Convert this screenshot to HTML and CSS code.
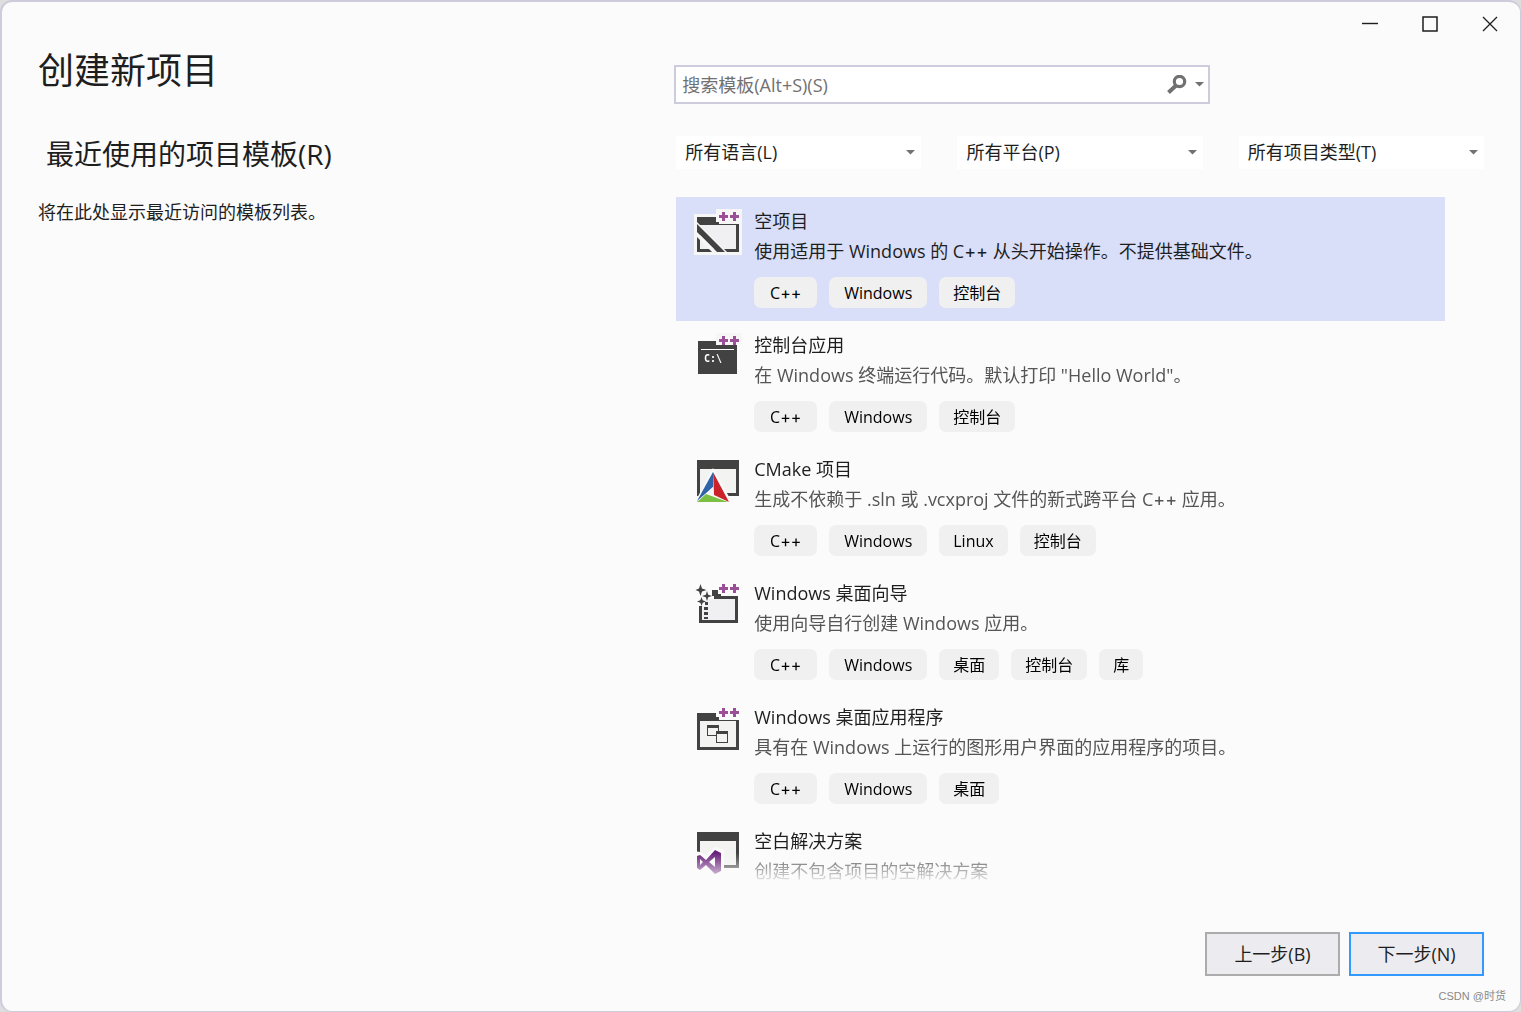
FILE: index.html
```html
<!DOCTYPE html>
<html lang="zh-CN">
<head>
<meta charset="utf-8">
<meta name="viewport" content="width=device-width, initial-scale=1">
<title>创建新项目</title>
<link rel="stylesheet" href="styles.css">
</head>
<body>
<svg class="defs" aria-hidden="true">
  <symbol id="plusplus" viewBox="0 0 20 10">
    <path d="M3 0h3v3h3v3H6v3H3V6H0V3h3zM14 0h3v3h3v3h-3v3h-3V6h-3V3h3z" fill="#9b4f96"/>
  </symbol>
</svg>
<div class="window">
  <header class="titlebar">
    <button type="button" class="caption" aria-label="最小化"><svg width="16" height="16"><path d="M0 7.5h16" stroke="#1e1e1e" stroke-width="1.4"/></svg></button>
    <button type="button" class="caption" aria-label="最大化"><svg width="16" height="16"><path d="M1 1h14v14H1z" fill="none" stroke="#1e1e1e" stroke-width="1.5"/></svg></button>
    <button type="button" class="caption" aria-label="关闭"><svg width="16" height="16"><path d="M1 1l14 14M15 1L1 15" stroke="#1e1e1e" stroke-width="1.3"/></svg></button>
  </header>

  <main class="content">
    <section class="recent">
      <h1>创建新项目</h1>
      <h2>最近使用的项目模板(R)</h2>
      <p>将在此处显示最近访问的模板列表。</p>
    </section>

    <section class="templates">
      <div class="search">
        <input type="text" placeholder="搜索模板(Alt+S)(S)" aria-label="搜索模板">
        <button type="button" aria-label="搜索">
          <svg width="20" height="20"><circle cx="12.5" cy="6.500" r="5.2" fill="none" stroke="#717171" stroke-width="3.200"/><path d="M9 10.500L1.500 17.500" stroke="#717171" stroke-width="4"/></svg>
        </button>
        <button type="button" aria-label="搜索选项"><svg width="9" height="5"><path d="M0 0h9L4.500 4.500z" fill="#717171"/></svg></button>
      </div>

      <div class="filters">
        <div class="filter">
          <select aria-label="语言"><option>所有语言(L)</option></select>
          <svg width="9" height="5"><path d="M0 0h9L4.500 4.500z" fill="#717171"/></svg>
        </div>
        <div class="filter">
          <select aria-label="平台"><option>所有平台(P)</option></select>
          <svg width="9" height="5"><path d="M0 0h9L4.500 4.500z" fill="#717171"/></svg>
        </div>
        <div class="filter">
          <select aria-label="项目类型"><option>所有项目类型(T)</option></select>
          <svg width="9" height="5"><path d="M0 0h9L4.500 4.500z" fill="#717171"/></svg>
        </div>
      </div>

      <ul class="list">
        <li class="item selected">
          <svg class="icon" width="48" height="50">
            <path d="M0 7h22V2h26v46H0z" fill="#f6f6f6"/>
            <path d="M3 10h19v5h3v2h20v28H3z" fill="#424242"/>
            <path d="M6 18h36v24H6z" fill="#f0eff1"/>
            <path d="M3 15L33 45H25L3 23z" fill="#f6f6f6"/>
            <path d="M3 17L31 45H23L3 25z" fill="#424242"/>
            <path d="M3 25L23 45H18L3 30z" fill="#f6f6f6"/>
            <use href="#plusplus" x="25" y="5" width="20" height="10"/>
          </svg>
          <div class="info">
            <h3>空项目</h3>
            <p>使用适用于 Windows 的 C<span class="plus">++</span> 从头开始操作。不提供基础文件。</p>
            <div class="tags"><span class="tag">C<span class="plus">++</span></span><span class="tag windows">Windows</span><span class="tag">控制台</span></div>
          </div>
        </li>
        <li class="item">
          <svg class="icon" width="48" height="50">
            <path d="M4 10h39v33H4z" fill="#424242"/>
            <path d="M22 2h26v11h-5v4h-2v-3H22z" fill="#f6f6f6"/>
            <path d="M24 14h19v4H24z" fill="#424242"/>
            <path d="M7 18h33v1H7z" fill="#fff"/>
            <text x="10" y="31" class="prompt">C:\</text>
            <use href="#plusplus" x="25" y="5" width="20" height="10"/>
          </svg>
          <div class="info">
            <h3>控制台应用</h3>
            <p>在 Windows 终端运行代码。默认打印 "Hello World"。</p>
            <div class="tags"><span class="tag">C<span class="plus">++</span></span><span class="tag windows">Windows</span><span class="tag">控制台</span></div>
          </div>
        </li>
        <li class="item">
          <svg class="icon" width="48" height="50">
            <path d="M3 5h42v36H3z" fill="#424242"/>
            <path d="M6 14h36v24H6z" fill="#f3f3f1"/>
            <path d="M19 13L0 49h39z" fill="#fbfbfb"/>
            <path d="M19 17L3 46l16-14z" fill="#2f64a8"/>
            <path d="M19 17l1 23 15 7z" fill="#cc2229"/>
            <path d="M3 47l9-8 22 8z" fill="#7cc043"/>
            <path d="M19 32l1 9-7-3z" fill="#f4f4f4"/>
          </svg>
          <div class="info">
            <h3>CMake 项目</h3>
            <p>生成不依赖于 .sln 或 .vcxproj 文件的新式跨平台 C<span class="plus">++</span> 应用。</p>
            <div class="tags"><span class="tag">C<span class="plus">++</span></span><span class="tag windows">Windows</span><span class="tag">Linux</span><span class="tag">控制台</span></div>
          </div>
        </li>
        <li class="item">
          <svg class="icon" width="48" height="50">
            <path d="M16 11h8v4h3v2h17v27H5V17h11z" fill="#424242"/>
            <path d="M8 20h33v21H8z" fill="#f0eff1"/>
            <path d="M10 23h4v3h-4zM10 28h4v3h-4zM10 33h4v3h-4zM10 38h4v2h-4z" fill="#424242"/>
            <path d="M3 14h11v-3h4v6h2v3h-5l-4 3v4H3z" fill="#fbfbfb"/>
            <path d="M6.500 5l1.500 4.500L12.500 11 8 12.500 6.500 17 5 12.500 1.500 11 5 9.500zM13 12l1.200 3.800L18 17l-3.800 1.200L13 22l-1.200-3.800L8 17l3.800-1.200zM7.500 18l1.200 3.300L12 22.500l-3.300 1.200L7.500 27l-1.200-3.300L3 22.500l3.300-1.200z" fill="#424242"/>
            <use href="#plusplus" x="25" y="5" width="20" height="10"/>
          </svg>
          <div class="info">
            <h3>Windows 桌面向导</h3>
            <p>使用向导自行创建 Windows 应用。</p>
            <div class="tags"><span class="tag">C<span class="plus">++</span></span><span class="tag windows">Windows</span><span class="tag">桌面</span><span class="tag">控制台</span><span class="tag">库</span></div>
          </div>
        </li>
        <li class="item">
          <svg class="icon" width="48" height="50">
            <path d="M3 10h19v4h3v3h20v30H3z" fill="#424242"/>
            <path d="M6 18h36v26H6z" fill="#f3f3f1"/>
            <path d="M13 22h12v11H13z" fill="#424242"/><path d="M14 25h10v7H14z" fill="#f3f3f1"/>
            <path d="M22 28h12v12H22z" fill="#424242"/><path d="M23 31h10v8H23z" fill="#f3f3f1"/>
            <use href="#plusplus" x="25" y="5" width="20" height="10"/>
          </svg>
          <div class="info">
            <h3>Windows 桌面应用程序</h3>
            <p>具有在 Windows 上运行的图形用户界面的应用程序的项目。</p>
            <div class="tags"><span class="tag">C<span class="plus">++</span></span><span class="tag windows">Windows</span><span class="tag">桌面</span></div>
          </div>
        </li>
        <li class="item">
          <svg class="icon" width="48" height="50">
            <path d="M3 5h42v36H3z" fill="#424242"/>
            <path d="M6 14h36v24H6z" fill="#f3f3f1"/>
            <path d="M0 24l6 1 6 3 9-8 9 3v27H0z" fill="#fbfbfb"/>
            <path fill-rule="evenodd" d="M21 23l6 3v18l-6 3-9-9-6 5-3-2V29l3-1 6 5zM21 30l-6 5 6 5zM6 32v6l3-3z" fill="#68217a"/>
          </svg>
          <div class="info">
            <h3>空白解决方案</h3>
            <p>创建不包含项目的空解决方案</p>
          </div>
        </li>
      </ul>
    </section>
  </main>

  <footer class="actions">
    <button type="button">上一步(B)</button>
    <button type="button" class="primary">下一步(N)</button>
  </footer>
  <span class="watermark">CSDN @时货</span>
</div>
</body>
</html>
```
FILE: styles.css
```css
* {
  box-sizing: border-box;
}

body {
  margin: 0;
  background: #dededf;
  color: #1e1e1e;
  font-family: "Open Sans", "Noto Sans CJK SC", sans-serif;
  font-size: 18px;
  line-height: 30px;
}

h1, h2, h3, p, ul {
  margin: 0;
  padding: 0;
  font-weight: 400;
}

button, input, select {
  margin: 0;
  font: inherit;
  color: inherit;
}

svg {
  display: block;
}

.defs {
  position: absolute;
  width: 0;
  height: 0;
}

.window {
  position: relative;
  display: flex;
  flex-direction: column;
  height: 100vh;
  min-height: 640px;
  border: solid #ccccdc;
  border-width: 2px 1px 1px 2px;
  border-radius: 12px;
  background: #fbfbfb;
}

.titlebar {
  display: flex;
  justify-content: flex-end;
  height: 44px;
}

.caption {
  display: grid;
  place-items: center;
  width: 60px;
  height: 44px;
  padding: 0;
  border: 0;
  background: none;
}

.content {
  display: grid;
  grid-template-columns: 44fr 56fr;
  grid-template-rows: minmax(0, 1fr);
  flex: 1;
  min-height: 0;
  padding: 0 36px;
}

.recent h1 {
  font-size: 36px;
  line-height: 50px;
}

.recent h2 {
  margin: 38px 0 24px;
  padding-left: 8px;
  font-size: 28px;
  line-height: 40px;
}

.recent p {
  line-height: 28px;
}

.templates {
  display: flex;
  flex-direction: column;
  min-width: 0;
  padding-top: 19px;
}

.search {
  display: flex;
  align-items: center;
  max-width: 536px;
  height: 39px;
  border: 2px solid #ccccdc;
  background: #fff;
}

.search input {
  flex: 1;
  min-width: 0;
  height: 35px;
  padding: 0 6px;
  border: 0;
  outline: 0;
  background: none;
}

.search input::placeholder {
  color: #717171;
  opacity: 1;
}

.search button {
  padding: 0 4px;
  border: 0;
  background: none;
}

.filters {
  display: grid;
  grid-template-columns: repeat(3, 1fr);
  gap: 36px;
  margin: 32px 0 28px;
  padding-left: 2px;
}

.filter {
  display: grid;
  align-items: center;
  background: #fff;
}

.filter select {
  grid-area: 1 / 1;
  width: 100%;
  height: 33px;
  padding: 0 24px 2px 9px;
  border: 0;
  background: none;
  appearance: none;
}

.filter svg {
  grid-area: 1 / 1;
  justify-self: end;
  margin-right: 6px;
  pointer-events: none;
}

.list {
  flex: 1;
  min-height: 0;
  margin: 0 39px 0 2px;
  overflow: hidden;
  list-style: none;
  mask-image: linear-gradient(to top, transparent, #000 32px);
}

.item {
  display: flex;
  gap: 12px;
  min-height: 124px;
  padding: 9px 18px 13px;
}

.item h3 {
  font-size: 18px;
}

.item p {
  color: #555;
}

.selected {
  background: #dadff9;
}

.item.selected p {
  color: #1e1e1e;
}

.icon {
  flex: none;
  margin-top: 1px;
}

.prompt {
  fill: #fff;
  font: bold 10px "DejaVu Sans Mono", monospace;
}

.plus {
  font-family: Inter, sans-serif;
  line-height: 1;
}

.tags {
  display: flex;
  flex-wrap: wrap;
  gap: 12px;
  margin-top: 11px;
}

.tag {
  height: 31px;
  padding: 0 14px;
  border-radius: 7px;
  background: #f0f0f0;
  color: #000;
  font-size: 16px;
  line-height: 32px;
  text-align: center;
}

.tag:first-child {
  min-width: 63px;
}

.windows {
  min-width: 98px;
}

.actions {
  display: flex;
  justify-content: flex-end;
  gap: 9px;
  padding: 47px 36px 35px;
}

.actions button {
  width: 135px;
  height: 44px;
  border: 2px solid #acacac;
  background: #ececf0;
}

.actions .primary {
  border-color: #3399ff;
}

.watermark {
  position: absolute;
  right: 14px;
  bottom: 5px;
  color: #888;
  font: 11px/20px "Liberation Sans", "Noto Sans CJK SC", sans-serif;
}
```
